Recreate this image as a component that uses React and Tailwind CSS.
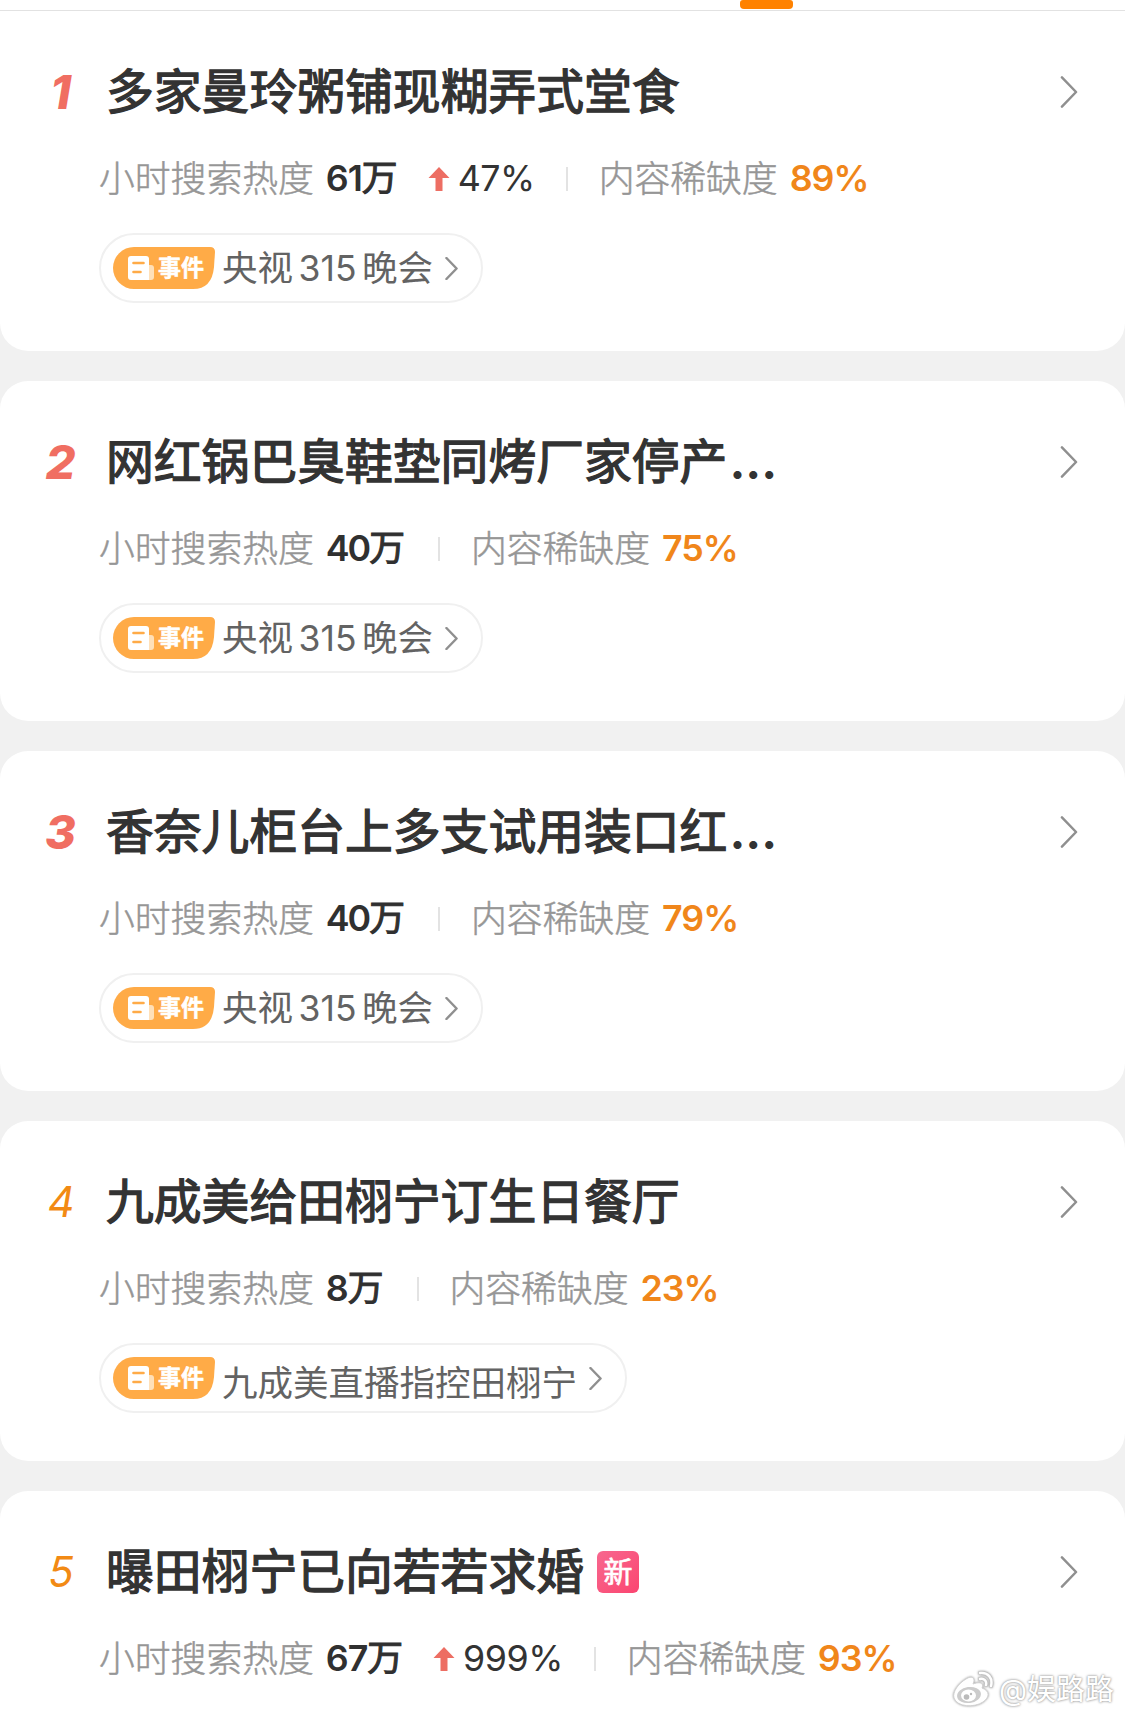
const font = 'font-["Inter","Noto_Sans_CJK_SC",sans-serif]'

const topics = [
  { rank: 1, title: '多家曼玲粥铺现糊弄式堂食', heat: '61', up: '47%', lack: '89%', event: ['央视', '315', '晚会'] },
  { rank: 2, title: '网红锅巴臭鞋垫同烤厂家停产', more: true, heat: '40', lack: '75%', event: ['央视', '315', '晚会'] },
  { rank: 3, title: '香奈儿柜台上多支试用装口红', more: true, heat: '40', lack: '79%', event: ['央视', '315', '晚会'] },
  { rank: 4, title: '九成美给田栩宁订生日餐厅', heat: '8', lack: '23%', event: ['九成美直播指控田栩宁'] },
  { rank: 5, title: '曝田栩宁已向若若求婚', isNew: true, heat: '67', up: '999%', lack: '93%' },
]

function Chevron({ className, strokeWidth }) {
  return (
    <svg viewBox="0 0 18 34" className={className} fill="none" stroke="#8f8f8f" strokeWidth={strokeWidth} strokeLinecap="round" strokeLinejoin="round">
      <path d="M1.5 1.5 16.5 17 1.5 32.5" />
    </svg>
  )
}

function Rank({ value }) {
  if (value <= 3) {
    return <span className="-mt-[2px] w-[121px] shrink-0 text-center text-[47px] font-extrabold italic text-[#f06e62]">{value}</span>
  }
  return <span className="w-[121px] shrink-0 pl-px text-center text-[42px] italic text-[#f28a14]">{value}</span>
}

function EventBadge() {
  return (
    <span className="relative flex h-[42px] w-[102px] items-center">
      <svg viewBox="0 0 102 42" className="absolute inset-0 h-full w-full">
        <path d="M21 0H97Q102 0 102 5L101 20Q99 42 80 42H21A21 21 0 0 1 21 0Z" fill="#ffab47" />
        <path d="M34 18H38Q41 18 41 21V30Q41 33 38 33H32Z" fill="#ffe0b8" />
        <path d="M18 9H33Q36 9 36 12V33H18Q15 33 15 30V12Q15 9 18 9Z" fill="#fff" />
        <path d="M20.500 16H30.500M20.500 25H27.500" stroke="#ffab47" strokeWidth="2.600" strokeLinecap="round" />
      </svg>
      <span className="relative ml-[45px] text-[23px] font-bold leading-none text-white [-webkit-text-stroke:0.5px_#fff]">事件</span>
    </span>
  )
}

function EventPill({ parts }) {
  const single = parts.length === 1
  return (
    <div className="ml-[99px] mt-[30px] flex h-[70px] w-fit items-center rounded-full border-2 border-[#f0f0f0] pl-[12px] pr-[23px]">
      <EventBadge />
      <span className={single ? 'relative top-[6px] ml-[7px] flex text-[35.500px] leading-none text-[#636363]' : 'mt-[2px] ml-[7px] flex gap-[5.500px] text-[35.500px] leading-none text-[#636363]'}>
        {parts.map((p) => (
          <span key={p}>{p}</span>
        ))}
      </span>
      <Chevron className="ml-[12px] h-[23px] w-[13px]" strokeWidth={3.6} />
    </div>
  )
}

function Topic({ topic }) {
  return (
    <section className="h-[340px] rounded-[28px] bg-white pt-[41px] first:rounded-t-none">
      <div className="flex h-[80px] items-center leading-none">
        <Rank value={topic.rank} />
        <h2 className="-ml-[15px] mt-[2px] whitespace-nowrap text-[47.800px] font-normal leading-none text-[#333] [-webkit-text-stroke:1.3px_#333]">
          {topic.title}
          {topic.more && <span className="ml-[2px] font-bold [-webkit-text-stroke:0]">...</span>}
        </h2>
        {topic.isNew && (
          <span className="ml-[13px] flex h-[42px] w-[42px] items-center justify-center rounded-[6px] bg-linear-to-br from-[#f7678f] to-[#fb4470] text-[29px] leading-none text-white [-webkit-text-stroke:0.7px_#fff]">新</span>
        )}
        <Chevron className="ml-auto mr-[47px] h-[32px] w-[18px]" strokeWidth={2.6} />
      </div>
      <div className="ml-[99px] mt-[25px] flex h-[46px] items-center whitespace-nowrap text-[35.800px] leading-none text-[#969696]">
        <span className="font-light [-webkit-text-stroke:0.5px_#969696]">小时搜索热度</span>
        <span className="-mt-[2px] ml-[12px] text-[#303030]">
          <span className={topic.heat === '40' ? 'font-semibold tracking-[-2px]' : 'font-semibold tracking-[-1px]'}>{topic.heat}</span>
          <span className="[-webkit-text-stroke:1px_#303030]">万</span>
        </span>
        {topic.up && (
          <>
            <svg viewBox="0 0 22 24" className="-mt-[2px] ml-[30px] h-[24px] w-[22px]">
              <path d="M11 0 21.500 11H14.500V24H7.500V11H.5Z" fill="#ed6e63" />
            </svg>
            <span className="-mr-[2px] -mt-[2px] ml-[8px] tracking-[-0.5px] text-[#333]">{topic.up}</span>
          </>
        )}
        <span className="-mt-[2px] ml-[33px] h-[24px] w-[2px] bg-[#e3e3e3]" />
        <span className="ml-[31px] font-light [-webkit-text-stroke:0.5px_#969696]">内容稀缺度</span>
        <span className="-mt-[2px] ml-[12px] font-semibold tracking-[-1px] text-[#f0861a]">{topic.lack}</span>
      </div>
      {topic.event && <EventPill parts={topic.event} />}
    </section>
  )
}

function Watermark() {
  return (
    <div className="absolute bottom-[10px] right-[11px] flex items-center gap-[5px]">
      <svg viewBox="0 0 42 36" className="h-[36px] w-[42px] drop-shadow-[0_0_1px_#999]">
        <path d="M14 8C20 4 24 7 21 13C29 10 32 13 30 17C38 20 38 26 31 31C22 37 5 36 2 27C0 21 7 12 14 8Z" fill="#fff" stroke="#d2d2d2" />
        <ellipse cx="17" cy="24" rx="12" ry="8" fill="#ccc" transform="rotate(-8 17 24)" />
        <ellipse cx="16.500" cy="24.500" rx="7.500" ry="6" fill="#fff" />
        <circle cx="14.500" cy="26" r="2.800" fill="#bbb" />
        <circle cx="19" cy="23" r="1.200" fill="#bbb" />
        <path d="M28 2C36 1 41 7 39 15M28 8C32 7 35 10 34 14" fill="none" stroke="#c4c4c4" strokeWidth="4" strokeLinecap="round" />
        <path d="M28 2C36 1 41 7 39 15M28 8C32 7 35 10 34 14" fill="none" stroke="#fff" strokeWidth="2.400" strokeLinecap="round" />
      </svg>
      <span className="text-[29px] leading-none text-white [text-shadow:0_0_2px_#999,0_0_3px_#aaa]">@娱路路</span>
    </div>
  )
}

export default function App() {
  return (
    <main lang="zh-CN" className={`${font} relative h-[1717px] w-[1125px] overflow-hidden bg-[#f1f1f1]`}>
      {/* Tab bar edge with the active indicator */}
      <div className="h-[11px] border-b border-[#e2e2e2] bg-white">
        <div className="ml-[740px] h-[9px] w-[53px] rounded-b-[4px] rounded-t-[3px] bg-[#ff8200]" />
      </div>
      <div className="flex flex-col gap-[30px]">
        {topics.map((t) => (
          <Topic key={t.rank} topic={t} />
        ))}
      </div>
      <Watermark />
    </main>
  )
}
